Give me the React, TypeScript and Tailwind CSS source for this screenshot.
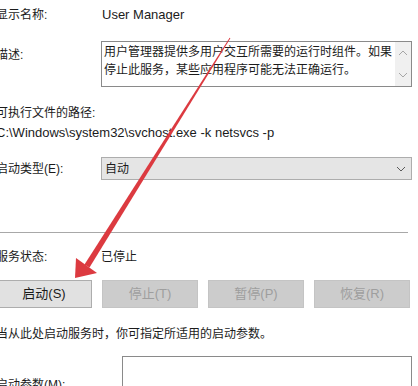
const font = { fontFamily: '"Liberation Sans", "Noto Sans CJK SC", sans-serif' };

function Chevron({ up, color }: { up?: boolean; color: string }) {
  return (
    <svg width="10" height="6" viewBox="0 0 10 6" fill="none">
      <polyline
        points={up ? "1,5 5,1 9,5" : "1,1 5,5 9,1"}
        stroke={color}
        strokeWidth="1"
      />
    </svg>
  );
}

function Btn({ label, disabled }: { label: string; disabled?: boolean }) {
  return (
    <div
      className={
        "w-[96px] h-[28px] flex items-center justify-center text-[13px] border " +
        (disabled
          ? "bg-[#cccccc] border-[#c4c4c4] text-[#9e9e9e]"
          : "bg-[#e1e1e1] border-[#adadad] text-[#1b1b1b]")
      }
    >
      {label}
    </div>
  );
}

function Arrow() {
  return (
    <svg className="absolute left-0 top-0 pointer-events-none" width="418" height="386">
      <polygon points="230.4,38.3 229.6,37.7 84.5,264.4 89.5,267.6" fill="#dc3a40" />
      <polygon points="75,278 76,258 97,273" fill="#dc3a40" />
    </svg>
  );
}

export default function App() {
  return (
    <div className="relative w-[418px] h-[386px] overflow-hidden bg-white text-[#1b1b1b] text-[12px]" style={font}>
      <div className="flex flex-col -ml-[4px] pr-[6px]">
        <div className="flex items-center h-[30px]">
          <span className="w-[106px]">显示名称:</span>
          <span className="text-[13px]">User Manager</span>
        </div>

        <div className="flex mt-[11px]">
          <span className="w-[105px] pt-[5px]">描述:</span>
          <div className="flex-1 h-[46px] border border-[#8a8a8a] flex">
            <div className="flex-1 pl-[2px] pt-[1px] leading-[18px]">
              用户管理器提供多用户交互所需要的运行时组件。如果停止此服务，某些应用程序可能无法正确运行。
            </div>
            <div className="w-[16px] bg-[#f0f0f0] flex flex-col items-center justify-between py-[8px]">
              <Chevron up color="#a6a6a6" />
              <Chevron color="#a6a6a6" />
            </div>
          </div>
        </div>

        <div className="mt-[17px] h-[18px] leading-[18px]">可执行文件的路径:</div>
        <div className="mt-[2px] h-[18px] leading-[18px] text-[13px]">C:\Windows\system32\svchost.exe -k netsvcs -p</div>

        <div className="flex items-center mt-[15px]">
          <span className="w-[105px]">启动类型(E):</span>
          <div className="flex-1 h-[23px] bg-[#e5e5e5] border border-[#adadad] flex items-center justify-between pl-[3px] pr-[5px]">
            <span>自动</span>
            <Chevron color="#5a5a5a" />
          </div>
        </div>

        <div className="mt-[52px] mr-[4px] h-px bg-[#a8a8a8]" />

        <div className="flex items-center mt-[15px] h-[18px]">
          <span className="w-[105px]">服务状态:</span>
          <span>已停止</span>
        </div>

        <div className="flex gap-[10px] mt-[14px]">
          <Btn label="启动(S)" />
          <Btn label="停止(T)" disabled />
          <Btn label="暂停(P)" disabled />
          <Btn label="恢复(R)" disabled />
        </div>

        <div className="mt-[17px] h-[18px] leading-[18px]">当从此处启动服务时，你可指定所适用的启动参数。</div>

        <div className="flex mt-[13px]">
          <span className="w-[126px] pt-[20px]">启动参数(M):</span>
          <div className="flex-1 h-[40px] border border-[#8a8a8a]" />
        </div>
      </div>
      <Arrow />
    </div>
  );
}
